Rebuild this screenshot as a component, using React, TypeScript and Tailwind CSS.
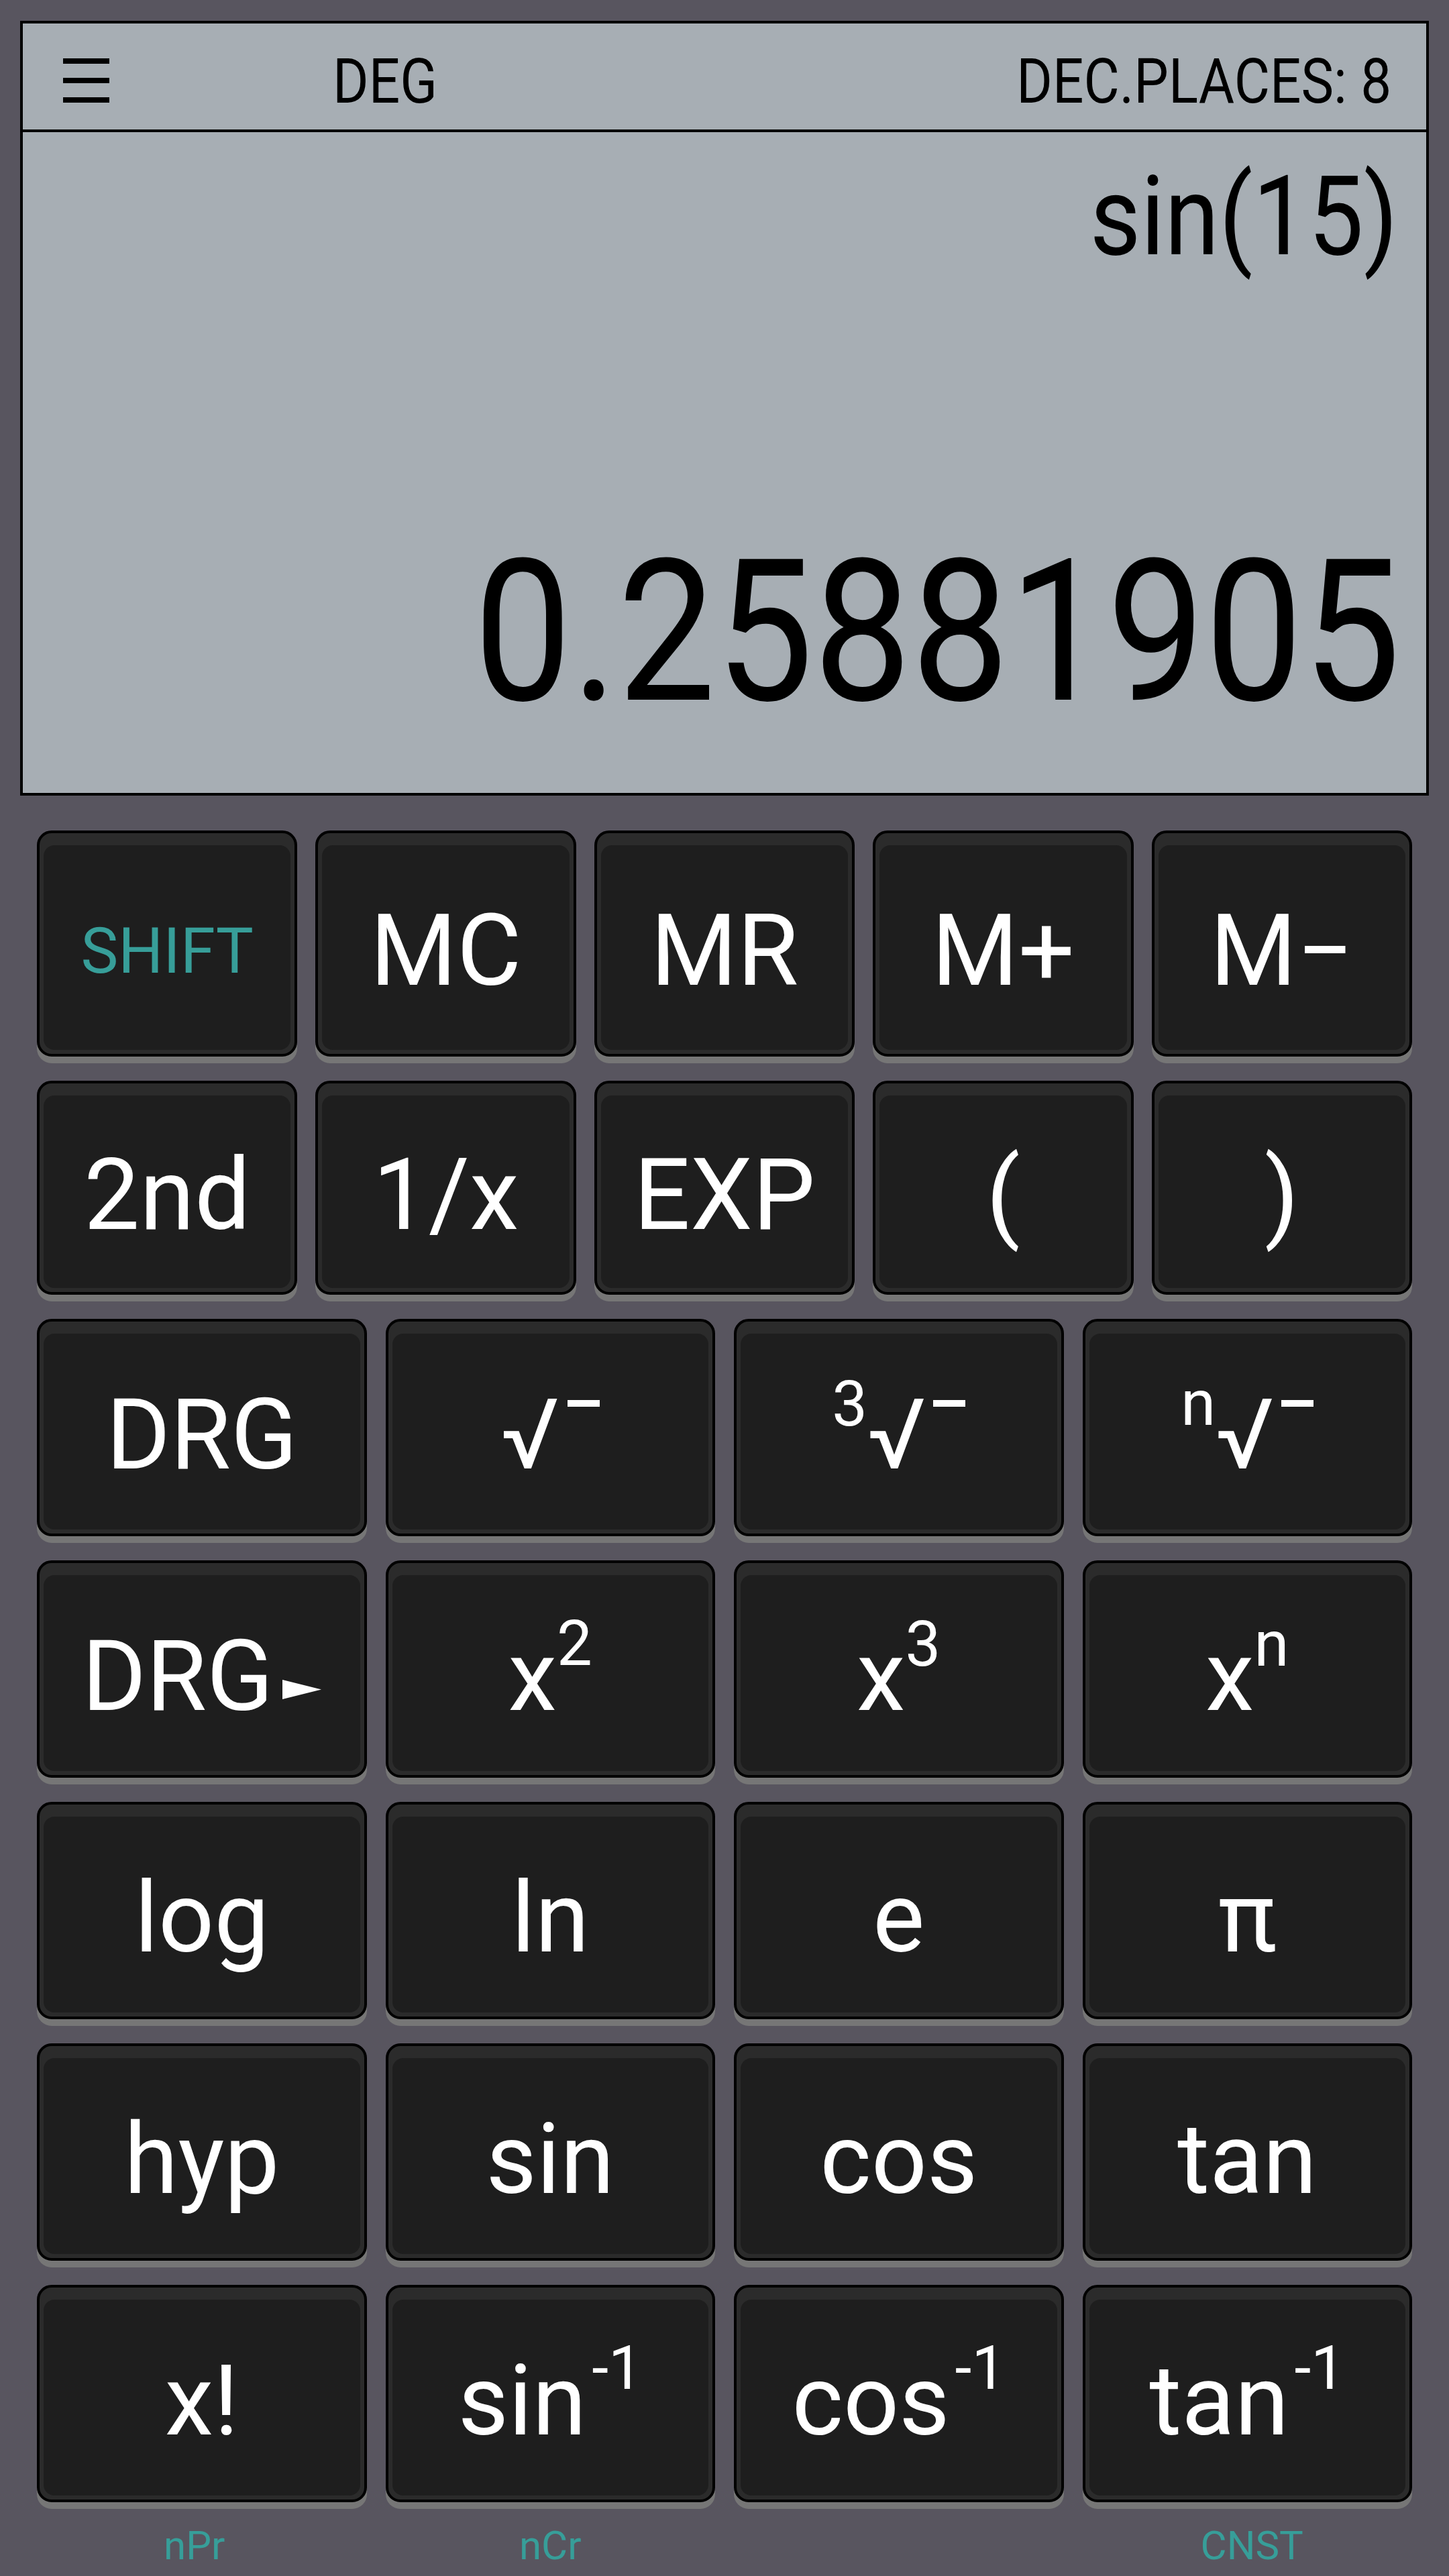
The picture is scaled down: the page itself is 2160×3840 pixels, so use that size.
import React from "react";

const Sup = ({ children, raise = "align-[67px]" }: { children: React.ReactNode; raise?: string }) => (
  <span className={`text-[94px] leading-[0] ${raise}`}>{children}</span>
);

const Bar = ({ ml }: { ml: string }) => (
  <span className={`inline-block w-[48px] h-[10px] bg-white align-[92px] ${ml}`} />
);

function Key({ h, children }: { h: string; children: React.ReactNode }) {
  return (
    <div
      className={`${h} flex flex-col rounded-[22px] border-[4px] border-black bg-[#2b2b2b] shadow-[0_10px_0_#767676] pt-[18px] px-[6px] pb-[6px]`}
    >
      <div className="flex-1 rounded-[16px] bg-[#1e1e1e] flex items-center justify-center pt-[11px] text-white leading-none whitespace-nowrap">
        {children}
      </div>
    </div>
  );
}

export default function App() {
  const r1 = "h-[337px]";
  const r2 = "h-[319px]";
  const r = "h-[324px]";
  const big = "text-[148px]";
  const mid = "text-[146px]";
  return (
    <div className="w-[2160px] h-[3840px] bg-[#58555f] pt-[31px] font-['Roboto',sans-serif]">
      {/* Display panel */}
      <div className="mx-[30px] border-[4px] border-black bg-[#a7aeb4] text-black">
        <div className="h-[162px] flex items-start border-b-[4px] border-black">
          <div className="ml-[60px] mt-[52px] flex flex-col gap-[21px] w-[69px]">
            <span className="h-[8px] bg-black" />
            <span className="h-[8px] bg-black" />
            <span className="h-[8px] bg-black" />
          </div>
          <div className="ml-[333px] mt-[40px] text-[93px] leading-none origin-left scale-x-[0.88]">DEG</div>
          <div className="ml-auto mr-[52px] mt-[40px] text-[93px] leading-none origin-right scale-x-[0.88] whitespace-nowrap">
            DEC.PLACES: 8
          </div>
        </div>
        <div className="h-[985px] flex flex-col items-end">
          <div className="mt-[43px] mr-[42px] text-[165px] leading-none origin-right scale-x-[0.89] whitespace-nowrap">
            sin(15)
          </div>
          <div className="mt-[390px] mr-[38px] text-[295px] leading-none origin-right scale-x-[0.88] whitespace-nowrap">
            0.25881905
          </div>
        </div>
      </div>

      {/* Keypad */}
      <div className="mt-[52px] mx-[55px] flex flex-col gap-y-[36px]">
        <div className="grid grid-cols-5 gap-x-[27px]">
          <Key h={r1}>
            <span className="text-[94px] text-[#379e99]">SHIFT</span>
          </Key>
          <Key h={r1}><span className={big}>MC</span></Key>
          <Key h={r1}><span className={big}>MR</span></Key>
          <Key h={r1}><span className={big}>M+</span></Key>
          <Key h={r1}><span className={big}>M−</span></Key>
        </div>
        <div className="grid grid-cols-5 gap-x-[27px]">
          <Key h={r2}><span className={big}>2nd</span></Key>
          <Key h={r2}><span className={big}>1/x</span></Key>
          <Key h={r2}><span className={big}>EXP</span></Key>
          <Key h={r2}><span className={big}>(</span></Key>
          <Key h={r2}><span className={big}>)</span></Key>
        </div>
        <div className="grid grid-cols-4 gap-x-[28px]">
          <Key h={r}><span className={mid}>DRG</span></Key>
          <Key h={r}>
            <span className={mid}>
              √<Bar ml="ml-[12px]" />
            </span>
          </Key>
          <Key h={r}>
            <span className={mid}>
              <Sup raise="align-[64px]">3</Sup>√<Bar ml="ml-[11px]" />
            </span>
          </Key>
          <Key h={r}>
            <span className={mid}>
              <Sup raise="align-[65px]">n</Sup>√<Bar ml="ml-[11px]" />
            </span>
          </Key>
        </div>
        <div className="grid grid-cols-4 gap-x-[28px]">
          <Key h={r}>
            <span className={mid}>
              DRG
              <svg width="58" height="29" viewBox="0 0 58 29" className="inline-block align-[16px] ml-[14px]">
                <polygon points="0,0 58,14.5 0,29" fill="white" />
              </svg>
            </span>
          </Key>
          <Key h={r}>
            <span className={mid}>
              x<Sup>2</Sup>
            </span>
          </Key>
          <Key h={r}>
            <span className={mid}>
              x<Sup raise="align-[66px]">3</Sup>
            </span>
          </Key>
          <Key h={r}>
            <span className={mid}>
              x<Sup raise="align-[66px]">n</Sup>
            </span>
          </Key>
        </div>
        <div className="grid grid-cols-4 gap-x-[28px]">
          <Key h={r}><span className={mid}>log</span></Key>
          <Key h={r}><span className={mid}>ln</span></Key>
          <Key h={r}><span className={mid}>e</span></Key>
          <Key h={r}><span className={mid}>π</span></Key>
        </div>
        <div className="grid grid-cols-4 gap-x-[28px]">
          <Key h={r}><span className={mid}>hyp</span></Key>
          <Key h={r}><span className={mid}>sin</span></Key>
          <Key h={r}><span className={mid}>cos</span></Key>
          <Key h={r}><span className={mid}>tan</span></Key>
        </div>
        <div className="grid grid-cols-4 gap-x-[28px]">
          <Key h={r}><span className={mid}>x!</span></Key>
          <Key h={r}>
            <span className={mid}>
              sin<span className="text-[90px] leading-[0] align-[68px] ml-[8px]">-1</span>
            </span>
          </Key>
          <Key h={r}>
            <span className={mid}>
              cos<span className="text-[90px] leading-[0] align-[68px] ml-[8px]">-1</span>
            </span>
          </Key>
          <Key h={r}>
            <span className={mid}>
              tan<span className="text-[90px] leading-[0] align-[68px] ml-[8px]">-1</span>
            </span>
          </Key>
        </div>
      </div>

      {/* Secondary labels */}
      <div className="mt-[35px] mx-[55px] grid grid-cols-4 gap-x-[28px] text-[60px] leading-none text-[#379e99]">
        <div className="text-center pr-[22px]">nPr</div>
        <div className="text-center">nCr</div>
        <div />
        <div className="text-center pl-[14px]">CNST</div>
      </div>
    </div>
  );
}
